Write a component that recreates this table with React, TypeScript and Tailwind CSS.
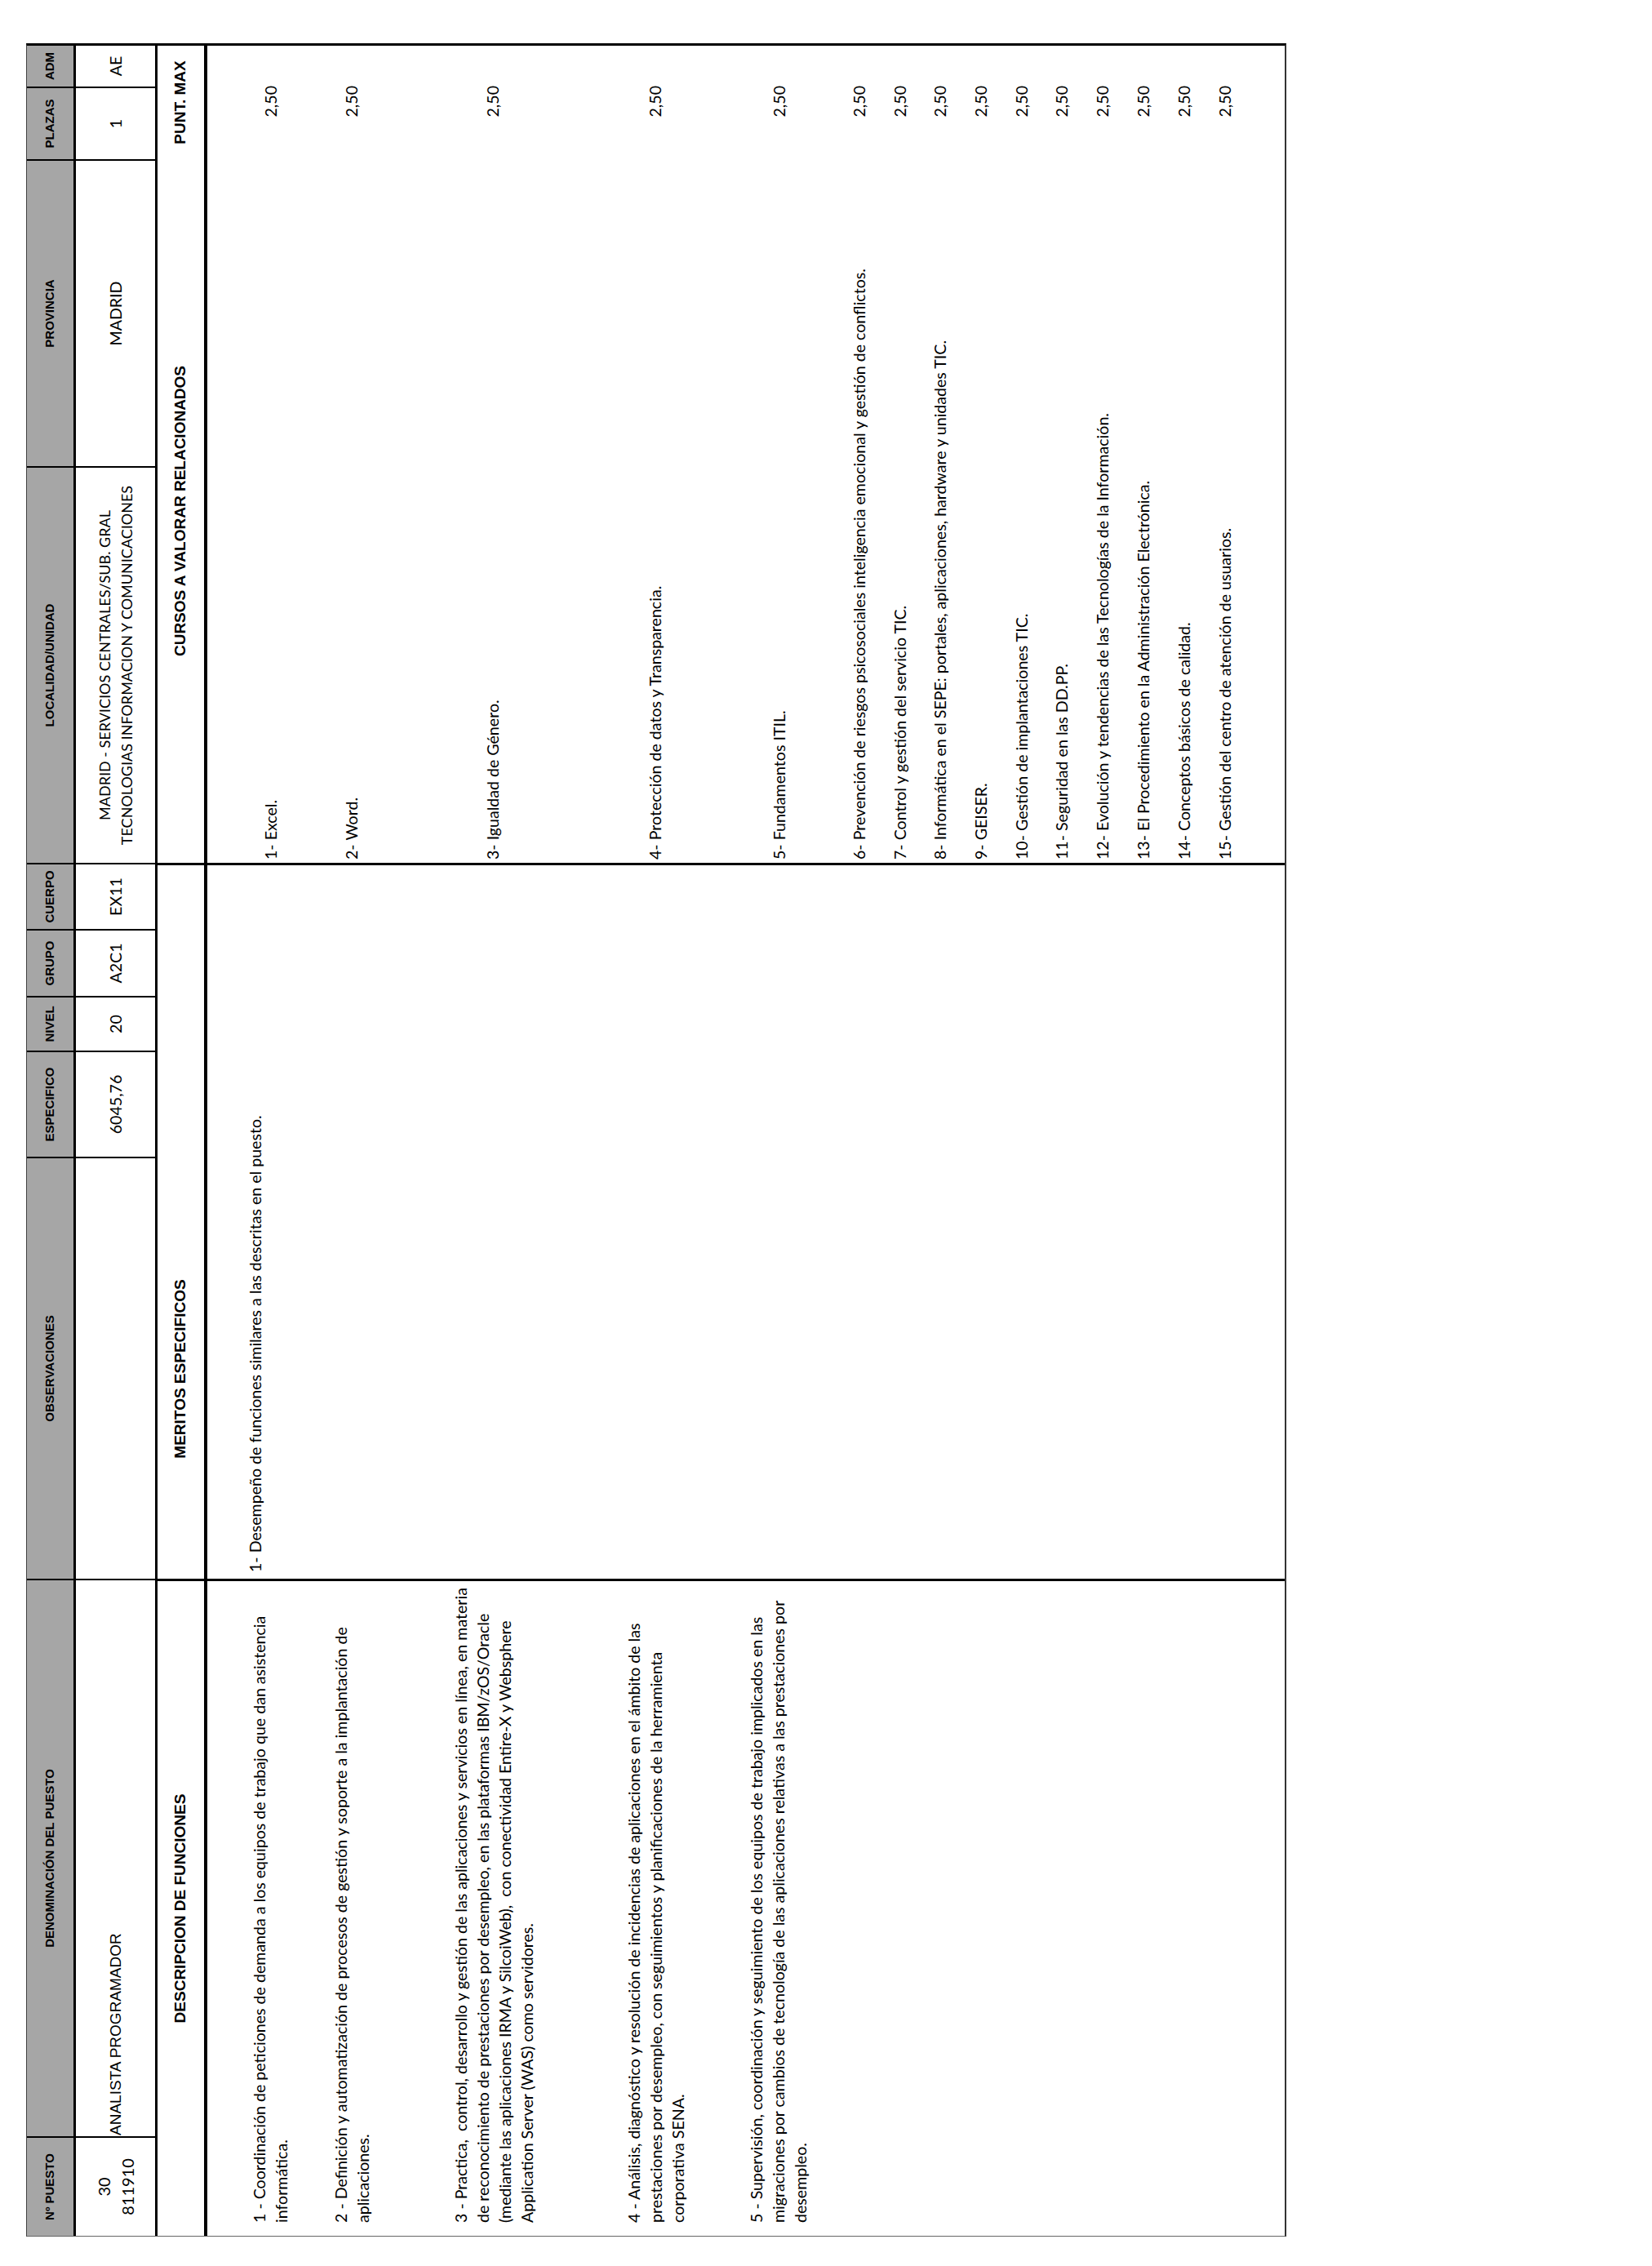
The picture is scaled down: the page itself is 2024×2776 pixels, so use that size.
const cols = "grid grid-cols-[122px_683px_517px_130px_67px_82px_81px_486px_376px_89px_50px]";
const sections = "grid grid-cols-[805px_877px_862px_139px]";
const body = "font-['Lato',sans-serif] text-[19.6px] leading-[27px] text-black";
const bold = "font-['Liberation_Sans',Arial,sans-serif] font-bold text-black";

const heads = [
  "Nº PUESTO",
  "DENOMINACIÓN DEL PUESTO",
  "OBSERVACIONES",
  "ESPECIFICO",
  "NIVEL",
  "GRUPO",
  "CUERPO",
  "LOCALIDAD/UNIDAD",
  "PROVINCIA",
  "PLAZAS",
  "ADM",
];

const funciones = [
  {
    mt: "mt-0",
    lines: ["1 - Coordinación de peticiones de demanda a los equipos de trabajo que dan asistencia", "informática."],
  },
  {
    mt: "mt-[46px]",
    lines: ["2 - Definición y automatización de procesos de gestión y soporte a la implantación de", "aplicaciones."],
  },
  {
    mt: "mt-[93px]",
    lines: [
      "3 - Practica,  control, desarrollo y gestión de las aplicaciones y servicios en línea, en materia",
      "de reconocimiento de prestaciones por desempleo, en las plataformas IBM/zOS/Oracle",
      "(mediante las aplicaciones IRMA y SilcoiWeb),  con conectividad Entire-X y Websphere",
      "Application Server (WAS) como servidores.",
    ],
  },
  {
    mt: "mt-[104px]",
    lines: [
      "4 - Análisis, diagnóstico y resolución de incidencias de aplicaciones en el ámbito de las",
      "prestaciones por desempleo, con seguimientos y planificaciones de la herramienta",
      "corporativa SENA.",
    ],
  },
  {
    mt: "mt-[69px]",
    lines: [
      "5 - Supervisión, coordinación y seguimiento de los equipos de trabajo implicados en las",
      "migraciones por cambios de tecnología de las aplicaciones relativas a las prestaciones por",
      "desempleo.",
    ],
  },
];

const cursos = [
  { mt: "mt-0", t: "1- Excel." },
  { mt: "mt-[72px]", t: "2- Word." },
  { mt: "mt-[146px]", t: "3- Igualdad de Género." },
  { mt: "mt-[172px]", t: "4- Protección de datos y Transparencia." },
  { mt: "mt-[125px]", t: "5- Fundamentos ITIL." },
  { mt: "mt-[71px]", t: "6- Prevención de riesgos psicosociales inteligencia emocional y gestión de conflictos." },
  { mt: "mt-[23px]", t: "7- Control y gestión del servicio TIC." },
  { mt: "mt-[22px]", t: "8- Informática en el SEPE: portales, aplicaciones, hardware y unidades TIC." },
  { mt: "mt-[23px]", t: "9- GEISER." },
  { mt: "mt-[23px]", t: "10- Gestión de implantaciones TIC." },
  { mt: "mt-[22px]", t: "11- Seguridad en las DD.PP." },
  { mt: "mt-[23px]", t: "12- Evolución y tendencias de las Tecnologías de la Información." },
  { mt: "mt-[23px]", t: "13- El Procedimiento en la Administración Electrónica." },
  { mt: "mt-[23px]", t: "14- Conceptos básicos de calidad." },
  { mt: "mt-[23px]", t: "15- Gestión del centro de atención de usuarios." },
];

function Cell({ children, last }: { children?: React.ReactNode; last?: boolean }) {
  return (
    <div className={`flex items-center justify-center text-center ${last ? "" : "border-r-2 border-black"}`}>
      {children}
    </div>
  );
}

export default function App() {
  return (
    <div className="h-[2776px] w-[2024px] overflow-hidden bg-white pl-[32px] pt-[2740px]">
      {/* the sheet is printed landscape and turned a quarter */}
      <div className="flex h-[1544px] w-[2687px] origin-top-left -rotate-90 flex-col border-t border-r-[3px] border-b-2 border-l border-t-[#444] border-r-black border-b-[#333] border-l-[#666] bg-white">
        {/* Headings */}
        <div className={`${cols} h-[60px] border-b-[3px] border-black bg-[#a6a6a6] ${bold} text-[15px]`}>
          {heads.map((h, i) => (
            <Cell key={h} last={i === heads.length - 1}>
              {h}
            </Cell>
          ))}
        </div>

        {/* Puesto */}
        <div className={`${cols} h-[100px] border-b-[3px] border-black ${body}`}>
          <Cell>
            <div className="text-[20px] leading-[29px]">
              <div>30</div>
              <div>811910</div>
            </div>
          </Cell>
          <div className="flex items-center border-r-2 border-black pl-[1px] font-['Liberation_Sans',Arial,sans-serif] text-[19px]">
            ANALISTA PROGRAMADOR
          </div>
          <Cell />
          <Cell>6045,76</Cell>
          <Cell>20</Cell>
          <Cell>A2C1</Cell>
          <Cell>EX11</Cell>
          <Cell>
            <div className="text-[18px] leading-[27px] whitespace-nowrap">
              <div>MADRID - SERVICIOS CENTRALES/SUB. GRAL</div>
              <div>TECNOLOGIAS INFORMACION Y COMUNICACIONES</div>
            </div>
          </Cell>
          <Cell>MADRID</Cell>
          <Cell>1</Cell>
          <Cell last>AE</Cell>
        </div>

        {/* Section titles */}
        <div className={`${sections} h-[61px] border-b-4 border-black ${bold} text-[19px]`}>
          <div className="flex items-center justify-center border-r-[3px] border-black">DESCRIPCION DE FUNCIONES</div>
          <div className="flex items-center justify-center border-r-[3px] border-black pr-[360px]">MERITOS ESPECIFICOS</div>
          <div className="flex items-center justify-center">CURSOS A VALORAR RELACIONADOS</div>
          <div className="flex items-center justify-center">PUNT. MAX</div>
        </div>

        {/* Contents */}
        <div className={`${sections} flex-1 ${body}`}>
          <div className="flex flex-col border-r-[3px] border-black pt-[50px] pl-[16px]">
            {funciones.map((f, i) => (
              <div key={i} className={f.mt}>
                {f.lines.map((l) => (
                  <div key={l} className="whitespace-pre">
                    {l}
                  </div>
                ))}
              </div>
            ))}
          </div>
          <div className="border-r-[3px] border-black pt-[45px] pl-[8px] whitespace-nowrap">
            1- Desempeño de funciones similares a las descritas en el puesto.
          </div>
          <div className="col-span-2 flex flex-col pt-[64px]">
            {cursos.map((c) => (
              <div key={c.t} className={`grid grid-cols-[862px_139px] ${c.mt}`}>
                <div className="pl-[4px] whitespace-nowrap">{c.t}</div>
                <div className="pr-[49px] text-right">2,50</div>
              </div>
            ))}
          </div>
        </div>
      </div>
    </div>
  );
}
